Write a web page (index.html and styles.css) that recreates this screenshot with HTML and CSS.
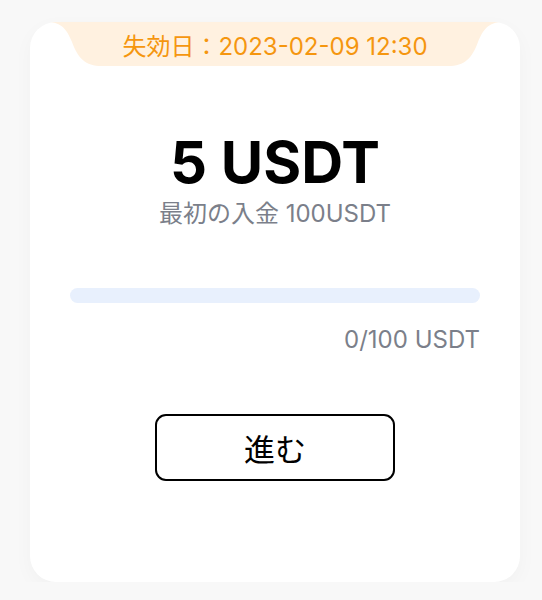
FILE: index.html
```html
<!DOCTYPE html>
<html lang="ja">

<head>
    <meta charset="UTF-8">
    <meta name="viewport" content="width=device-width, initial-scale=1.0">
    <title>Bonus</title>
    <link rel="stylesheet" href="styles.css">
</head>

<body>
    <div class="card">
        <!-- Expiry tab -->
        <div class="expiry">
            <svg class="expiry-shape" viewBox="0 0 456 44" preserveAspectRatio="none">
                <path d="M0,0 C15,0 20,8 25,20 C31,36 38,44 55,44 H401 C418,44 425,36 431,20 C436,8 441,0 456,0 Z" fill="#fff1e0"/>
            </svg>
            <span class="expiry-text">失効日：2023-02-09 12:30</span>
        </div>

        <!-- Reward -->
        <div class="reward">
            <div class="amount">5 USDT</div>
            <div class="condition">最初の入金 100USDT</div>
        </div>

        <!-- Progress -->
        <div class="progress">
            <div class="progress-track">
                <div class="progress-fill" style="width: 0%"></div>
            </div>
            <div class="progress-label">0/100 USDT</div>
        </div>

        <button class="go-btn">進む</button>
    </div>
</body>

</html>
```

FILE: styles.css
```css
/* General Styles */
body {
    margin: 0;
    padding: 22px 22px 0 30px;
    background-color: #f8f8f8;
    font-family: Inter, "Noto Sans CJK JP", sans-serif;
}

.card {
    height: 560px;
    background-color: #fff;
    border-radius: 26px;
    box-shadow: 0 6px 20px rgba(0, 0, 0, 0.03);
    display: flex;
    flex-direction: column;
    align-items: center;
    padding: 0 40px;
}

/* Expiry tab */
.expiry {
    position: relative;
    align-self: stretch;
    margin: 0 -23px;
    height: 44px;
    display: flex;
    align-items: center;
    justify-content: center;
}

.expiry-shape {
    position: absolute;
    top: 0;
    left: 0;
    width: 100%;
    height: 100%;
}

.expiry-text {
    position: relative;
    color: #f5960f;
    font-size: 24px;
}

/* Reward */
.reward {
    margin-top: 61px;
    text-align: center;
}

.amount {
    font-size: 58px;
    font-weight: 700;
    line-height: 70px;
    color: #000;
}

.condition {
    margin-top: 3px;
    font-size: 24px;
    line-height: 28px;
    color: #7b7f8a;
}

/* Progress */
.progress {
    align-self: stretch;
    margin-top: 60px;
}

.progress-track {
    height: 15px;
    border-radius: 8px;
    background-color: #e8f0fd;
    overflow: hidden;
}

.progress-fill {
    height: 100%;
    background-color: #f5960f;
}

.progress-label {
    margin-top: 22px;
    text-align: right;
    font-size: 24px;
    color: #7b7f8a;
}

.go-btn {
    margin-top: 60px;
    width: 240px;
    height: 67px;
    background-color: #fff;
    border: 2px solid #000;
    border-radius: 11px;
    font-family: Inter, "Noto Sans CJK JP", sans-serif;
    font-size: 31px;
    color: #000;
    cursor: pointer;
}
```
